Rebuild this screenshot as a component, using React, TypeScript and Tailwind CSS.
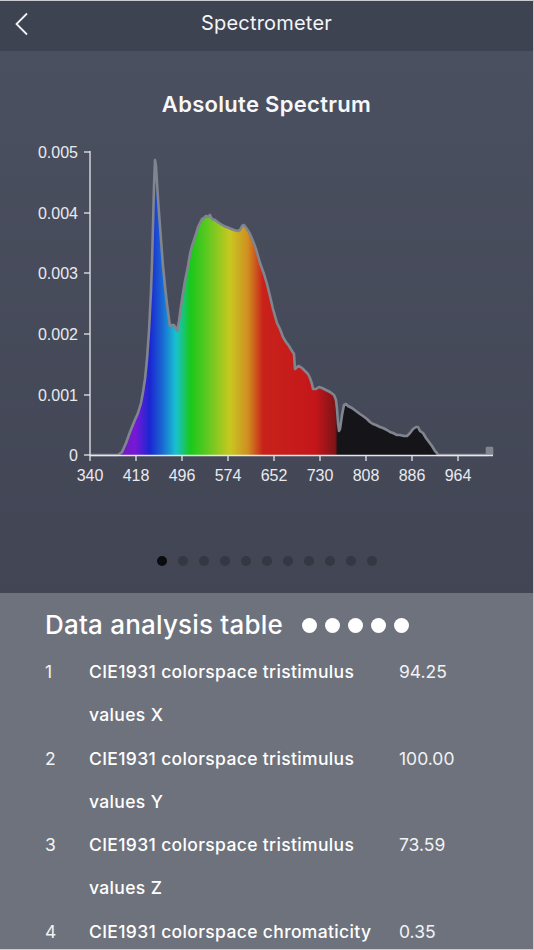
import React from 'react';

const font = { fontFamily: '"Liberation Sans", Arial, sans-serif' };
const uiFont = { fontFamily: 'Inter, "Liberation Sans", Arial, sans-serif' };

// curve of the absolute spectrum, already in page pixels
const curve: [number, number][] = [
  [90, 454], [118, 454], [122, 451], [126, 442], [130, 431], [134, 421], [138, 412], [141, 402], [143, 391],
  [145, 378], [147, 358], [149, 330], [151, 290], [152, 262], [153, 225], [154, 185], [155, 159], [156, 165],
  [157, 182], [158, 198], [160, 225], [162, 252], [163, 265], [165, 285], [167, 303], [169, 318], [170, 325],
  [172, 324], [174, 324], [176, 328], [177, 330], [179, 320], [181, 305], [183, 292], [185, 280], [188, 265],
  [190, 253], [192, 245], [194, 239], [196, 233], [198, 226], [200, 222], [202, 218], [204, 217], [206, 215],
  [208, 216], [210, 214], [212, 218], [215, 219], [219, 222], [224, 225], [229, 227], [234, 229], [238, 230],
  [240, 229], [242, 225], [244, 224], [247, 228], [250, 233], [253, 240], [256, 248], [260, 262], [264, 273],
  [267, 283], [270, 295], [273, 308], [275, 315], [277, 322], [280, 328], [283, 336], [286, 341], [289, 345],
  [292, 350], [294, 353], [295, 368], [297, 366], [299, 365], [302, 367], [305, 370], [308, 373], [310, 377],
  [312, 383], [313, 388], [316, 388], [319, 386], [322, 387], [326, 389], [330, 391], [334, 394], [336, 399],
  [337, 408], [338, 422], [339, 430], [340, 428], [341, 421], [342, 414], [344, 404], [346, 403], [348, 405],
  [352, 407], [356, 410], [360, 413], [363, 415], [367, 418], [370, 421], [373, 423], [376, 424], [380, 426],
  [383, 427], [387, 429], [390, 431], [393, 432], [397, 434], [400, 434], [404, 435], [407, 435], [410, 432],
  [413, 428], [416, 426], [418, 426], [420, 430], [423, 432], [426, 437], [429, 441], [432, 445], [435, 450],
  [437, 452], [438, 454],
];

const yTicks = [
  { label: '0.005', y: 151 },
  { label: '0.004', y: 212 },
  { label: '0.003', y: 272 },
  { label: '0.002', y: 333 },
  { label: '0.001', y: 394 },
  { label: '0', y: 454 },
];

const xTicks = [340, 418, 496, 574, 652, 730, 808, 886, 964];
const xOf = (nm: number) => 90 + ((nm - 340) * 46) / 78;

const rows = [
  { n: 1, label: ['CIE1931 colorspace tristimulus', 'values X'], value: '94.25' },
  { n: 2, label: ['CIE1931 colorspace tristimulus', 'values Y'], value: '100.00' },
  { n: 3, label: ['CIE1931 colorspace tristimulus', 'values Z'], value: '73.59' },
  { n: 4, label: ['CIE1931 colorspace chromaticity'], value: '0.35' },
];

function SpectrumChart() {
  const line = curve.map(([x, y]) => `${x},${y}`).join(' ');
  const fill = `M ${line} L 90,454 Z`;
  const stroke = `M ${line} L 487,454 L 487,447 L 492,447 L 492,454`;

  return (
    <svg width="534" height="350" viewBox="0 140 534 350" className="block">
      <defs>
        <linearGradient id="spec" gradientUnits="userSpaceOnUse" x1="90" y1="0" x2="492" y2="0">
          <stop offset="0.075" stopColor="#6a1fb8" />
          <stop offset="0.112" stopColor="#7818d6" />
          <stop offset="0.149" stopColor="#1a26d2" />
          <stop offset="0.179" stopColor="#1a66d2" />
          <stop offset="0.214" stopColor="#18c2d2" />
          <stop offset="0.249" stopColor="#18c81c" />
          <stop offset="0.29" stopColor="#5cc820" />
          <stop offset="0.348" stopColor="#c8c820" />
          <stop offset="0.393" stopColor="#d08e20" />
          <stop offset="0.43" stopColor="#c8221a" />
          <stop offset="0.56" stopColor="#c4161a" />
          <stop offset="0.61" stopColor="#801418" />
          <stop offset="0.616" stopColor="#151519" />
          <stop offset="1" stopColor="#151519" />
        </linearGradient>
      </defs>

      <path d={fill} fill="url(#spec)" />
      <path d={stroke} fill="none" stroke="#80858f" strokeWidth="2.6" strokeLinejoin="round" />
      <rect x="487" y="447" width="5" height="7" fill="#80858f" />

      {/* axes */}
      <line x1="90" y1="150" x2="90" y2="454.5" stroke="#e6e7ea" strokeWidth="1.3" />
      <line x1="90" y1="454.5" x2="493" y2="454.5" stroke="#e6e7ea" strokeWidth="1.3" />
      {yTicks.map(t => (
        <g key={t.label}>
          <line x1="84" y1={t.y} x2="90" y2={t.y} stroke="#e6e7ea" strokeWidth="1.3" />
          <text x="78" y={t.y + 5.5} textAnchor="end" fill="#e9eaee" fontSize="16" style={font}>
            {t.label}
          </text>
        </g>
      ))}
      {xTicks.map(nm => (
        <g key={nm}>
          <line x1={xOf(nm)} y1="454" x2={xOf(nm)} y2="460" stroke="#e6e7ea" strokeWidth="1.3" />
          <text x={xOf(nm)} y="480" textAnchor="middle" fill="#e9eaee" fontSize="16" style={font}>
            {nm}
          </text>
        </g>
      ))}
    </svg>
  );
}

export default function App() {
  return (
    <div className="w-[534px] h-[950px] overflow-hidden bg-[#6e727c] text-white border-t border-r border-b border-[#c9cbcf]" style={uiFont}>
      {/* Top bar */}
      <div className="relative h-[50px] bg-[#3e4351] flex items-center justify-center">
        <svg className="absolute left-[14px] top-[11px]" width="16" height="24" viewBox="0 0 16 24">
          <path d="M13 1.5 L2.5 12 L13 22.5" fill="none" stroke="#f2f3f5" strokeWidth="1.8" />
        </svg>
        <span className="text-[20px] tracking-[0.2px] text-[#f4f5f7] -mt-[6px]">Spectrometer</span>
      </div>

      {/* Chart carousel */}
      <div className="h-[542px] flex flex-col bg-gradient-to-b from-[#4b5060] to-[#414554]">
        <h1 className="pt-[39px] text-center text-[22px] tracking-[0.3px] font-semibold leading-[28px] text-[#f6f7f9]">Absolute Spectrum</h1>
        <div className="mt-[23px]">
          <SpectrumChart />
        </div>
        <div className="mt-[65px] flex justify-center gap-[11px]">
          {Array.from({ length: 11 }).map((_, i) => (
            <span
              key={i}
              className={i === 0 ? 'w-[10px] h-[10px] rounded-full bg-[#0b0c0f]' : 'w-[10px] h-[10px] rounded-full bg-[#343843]'}
            />
          ))}
        </div>
      </div>

      {/* Data table */}
      <div className="px-[45px] pt-[16px]">
        <div className="flex items-center">
          <h2 className="text-[26px] tracking-[0.2px] font-medium leading-[32px] text-white">Data analysis table</h2>
          <div className="ml-[19px] flex gap-[8px]">
            {Array.from({ length: 5 }).map((_, i) => (
              <span key={i} className="w-[15px] h-[15px] rounded-full bg-white" />
            ))}
          </div>
        </div>
        <div className="mt-[9px]">
          {rows.map(r => (
            <div key={r.n} className="flex text-[17.5px] leading-[43.3px]">
              <span className="w-[44px] text-[#f1f2f4]">{r.n}</span>
              <span className="w-[310px] font-medium tracking-[0.35px] text-white">
                {r.label.map(l => (
                  <span key={l} className="block">{l}</span>
                ))}
              </span>
              <span className="text-[#f1f2f4]">{r.value}</span>
            </div>
          ))}
        </div>
      </div>
    </div>
  );
}
